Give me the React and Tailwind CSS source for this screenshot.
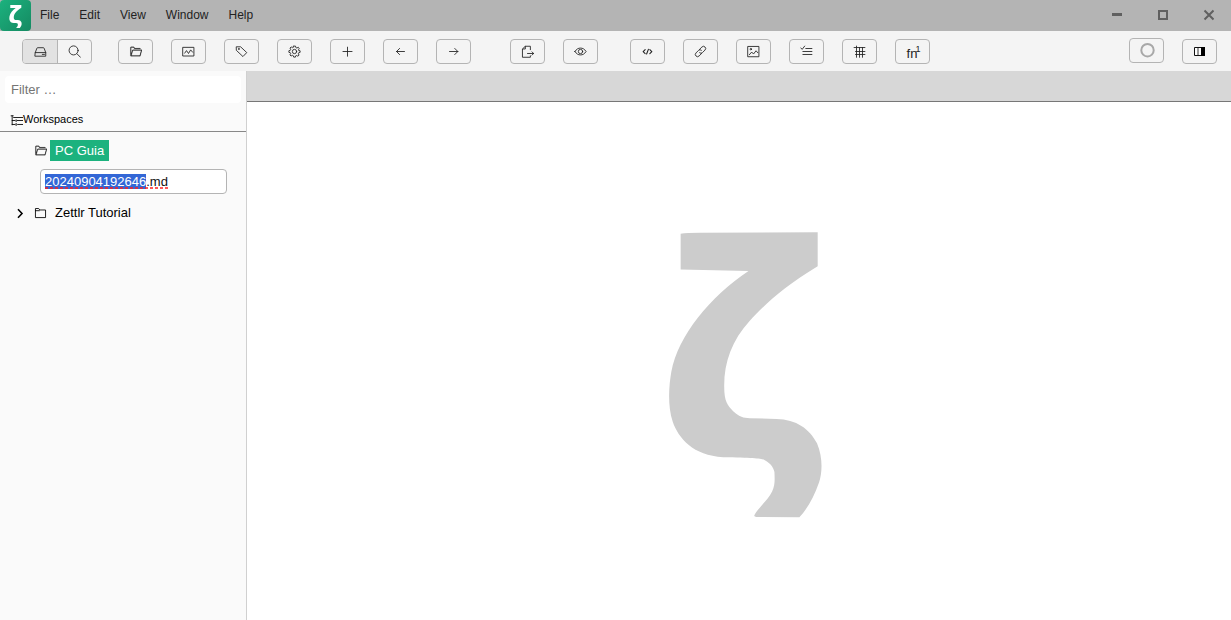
import { useEffect, useRef, useState } from "react";

const ZETA =
  "M92 40 Q110 37 150 37 L504 36 V138 C400 200 340 258 300 302 C245 362 222 430 223 500 C223 545 233 555 250 574 C270 592 280 594 300 595 L380 597 C440 598 480 627 502 670 C520 712 518 760 508 788 C492 834 472 868 449 893 L320 892 Q311 891 314 886 C325 865 355 840 367 815 C376 797 375 780 374 757 C372 740 355 725 345 721 C335 715 310 714 220 712 C130 708 85 655 68 605 C52 555 57 495 64 455 C85 345 180 230 296 152 L92 148 Z";

function Zeta({ className }) {
  return (
    <svg className={className} viewBox="57 36 460 858" fill="currentColor" aria-hidden="true">
      <path d={ZETA} />
    </svg>
  );
}

function Icon({ children, className = "h-[13px] w-[13px]" }) {
  return (
    <svg
      className={className}
      viewBox="0 0 36 36"
      fill="none"
      stroke="currentColor"
      strokeWidth="2.4"
      strokeLinejoin="round"
      strokeLinecap="round"
      aria-hidden="true"
    >
      {children}
    </svg>
  );
}

const icons = {
  disk: <path d="M3.5 21 L8 9 Q8.5 7.5 10 7.5 H26 Q27.5 7.5 28 9 L32.5 21 V31 H3.5 Z M3.5 21 H32.5 M23 26 H29" />,
  search: (
    <>
      <circle cx="15.5" cy="15" r="12.5" />
      <path d="M25 24.5 L34.5 34" />
    </>
  ),
  folderOpen: (
    <path
      fill="currentColor"
      strokeWidth="0.6"
      d="M35.32,13.74A1.71,1.71,0,0,0,33.87,13H11.17a2.59,2.59,0,0,0-2.25,1.52,1,1,0,0,0,0,.14L6,25V7h6.49l2.61,3.59a1,1,0,0,0,.81.41H32a2,2,0,0,0-2-2H16.4L14,5.6A2,2,0,0,0,12.37,5H6A2,2,0,0,0,4,7V29.69A1.37,1.37,0,0,0,5.41,31H30.34a1,1,0,0,0,1-.72l4.19-15.1A1.64,1.64,0,0,0,35.32,13.74ZM29.55,29H6.9l3.88-13.81a.66.66,0,0,1,.38-.24H33.49Z"
    />
  ),
  folder: <path d="M4 31 V7 H13 L16 11 H32 V31 Z M4 13 H15" />,
  chart: <path d="M3 6.5 H33 V30.5 H3 Z M7.5 22.5 L12.5 15.5 L18 23.5 L24 13.5 L29.5 20" />,
  tag: (
    <>
      <path d="M4.5 5 H15.5 L32.5 21 L22 32 L4.5 15.5 Z" />
      <circle cx="10.5" cy="11" r="1.2" />
    </>
  ),
  cog: (
    <>
      <circle cx="18" cy="18" r="6" />
      <path d="M15.3 3 H20.7 L21.8 7.2 L24.6 8.4 L28.4 6.2 L31 10 L29 13.2 L29.8 15.4 L33.5 16 V20.5 L29.5 21.6 L28.6 24.2 L30.6 28 L27.2 31 L23.8 29 L21.5 29.8 L20.6 33.5 H15.8 L14.7 29.6 L12.2 28.6 L8.4 30.6 L5.2 27.4 L7.4 23.8 L6.4 21.3 L2.5 20.4 V15.8 L6.4 14.7 L7.5 12 L5.4 8.4 L8.8 5.4 L12.2 7.4 L14.3 6.6 Z" />
    </>
  ),
  plus: <path d="M18 6 V31 M5.5 18 H30.5" />,
  back: <path d="M29 18 H7 M15.5 9.5 L7 18 L15.5 26.5" />,
  forward: <path d="M7 18 H30 M21.5 9.5 L30 18 L21.5 26.5" />,
  exportFile: (
    <path d="M26 13 V3.5 H12 L4 11 V34 H26 V30 M5 11 H12 V4 M18 23.5 H35 M30.5 19 L35 23.5 L30.5 28" />
  ),
  eye: (
    <>
      <path d="M2.5 18 C7 11 12 8.5 18 8.5 S29 11 33.5 18 C29 25 24 27.5 18 27.5 S7 25 2.5 18 Z" />
      <circle cx="18" cy="18" r="6" />
    </>
  ),
  code: <path strokeWidth="3" d="M11.5 13 L6 18.5 L11.5 24 M24.5 13 L30 18.5 L24.5 24 M20.5 12 L15.5 25" />,
  link: (
    <>
      <path d="M15 12.5 L22 5.5 A5.8 5.8 0 0 1 30.5 14 L23.5 21 A5.8 5.8 0 0 1 15.5 21.5" />
      <path d="M21 23.5 L14 30.5 A5.8 5.8 0 0 1 5.5 22 L12.5 15 A5.8 5.8 0 0 1 20.5 14.5" />
    </>
  ),
  image: (
    <>
      <path d="M3 4 H33 V32.5 H3 Z M6.5 27 L13 19.5 L18 25 L25 16 L30 21.5" />
      <circle cx="10.5" cy="11.5" r="2" />
    </>
  ),
  tasks: <path d="M2 8 L6 12 L13 3 M16 9.7 H33 M8 18 H33 M8 26.3 H33" />,
  table: <path d="M3 7 H33 M7 18 H33 M7 26.3 H33 M9.7 3 V34 M18 7 V34 M26.3 7 V34" />,
  tree: (
    <path d="M6 5 V30 M10 9.7 H35 M6 18 H14 M20 18 H35 M6 29 H14 M21 29 H35 M3 5 H9 M17 16 V21 M17 26 V32" />
  ),
};

const frame =
  "flex h-[25px] w-[35px] items-center justify-center rounded border border-[#b4b4b4] text-[#222]";

function ToolButton({ label, icon, className = "", children }) {
  return (
    <button type="button" aria-label={label} className={`${frame} ${className}`}>
      {icon ? <Icon>{icons[icon]}</Icon> : children}
    </button>
  );
}

function TitleBar() {
  return (
    <header className="flex h-[31px] items-center bg-[#b4b4b4] pb-px text-xs text-[#222]">
      <div className="mt-px flex h-[31px] w-[31px] items-center justify-center rounded bg-gradient-to-br from-[#1cb27e] to-[#158a62] pt-0.5 text-white">
        <Zeta className="h-[23px] w-[13px]" />
      </div>
      <nav className="flex gap-5 pl-[9px]">
        {["File", "Edit", "View", "Window", "Help"].map((name) => (
          <button key={name} type="button">
            {name}
          </button>
        ))}
      </nav>
      <div className="ml-auto flex h-full text-[#606060]">
        <button type="button" aria-label="Minimize" className="flex w-[46px] items-center justify-center">
          <svg className="h-3 w-3" viewBox="0 0 12 12" aria-hidden="true">
            <path d="M2 4 H12 V7 H2 Z" fill="currentColor" />
          </svg>
        </button>
        <button type="button" aria-label="Maximize" className="flex w-[46px] items-center justify-center">
          <svg className="h-3 w-3" viewBox="0 0 12 12" aria-hidden="true">
            <path d="M3 2 H11 V10 H3 Z" fill="none" stroke="currentColor" strokeWidth="2" />
          </svg>
        </button>
        <button type="button" aria-label="Close" className="flex w-[46px] items-center justify-center">
          <svg className="h-3 w-3" viewBox="0 0 12 12" aria-hidden="true">
            <path d="M2.5 1.5 L11.5 10.5 M11.5 1.5 L2.5 10.5" fill="none" stroke="currentColor" strokeWidth="2" />
          </svg>
        </button>
      </div>
    </header>
  );
}

function Toolbar() {
  return (
    <div className="flex h-10 items-center bg-[#f4f4f4] pt-px pr-3.5 pl-[22px]">
      <div className="flex h-[25px] w-[70px] overflow-hidden rounded border border-[#b4b4b4] text-[#222]">
        <button
          type="button"
          aria-label="File manager"
          aria-pressed="true"
          className="flex w-[35px] items-center justify-center border-r border-[#b4b4b4] bg-[#e2e2e2]"
        >
          <Icon>{icons.disk}</Icon>
        </button>
        <button type="button" aria-label="Search" className="flex flex-1 items-center justify-center">
          <Icon>{icons.search}</Icon>
        </button>
      </div>
      <div className="ml-[26px] flex gap-[18px]">
        <ToolButton label="Open workspace" icon="folderOpen" />
        <ToolButton label="Statistics" icon="chart" />
        <ToolButton label="Tags" icon="tag" />
        <ToolButton label="Preferences" icon="cog" />
        <ToolButton label="New file" icon="plus" />
        <ToolButton label="Back" icon="back" />
        <ToolButton label="Forward" icon="forward" />
      </div>
      <div className="ml-[39px] flex gap-[18px]">
        <ToolButton label="Export" icon="exportFile" />
        <ToolButton label="Readability" icon="eye" />
      </div>
      <div className="ml-8 flex gap-[18px]">
        <ToolButton label="Insert code" icon="code" />
        <ToolButton label="Insert link" icon="link" />
        <ToolButton label="Insert image" icon="image" />
        <ToolButton label="Insert task list" icon="tasks" />
        <ToolButton label="Insert table" icon="table" />
        <ToolButton label="Insert footnote">
          <span className="pt-1 pl-0.5 text-[13px] leading-none">fn</span>
          <span className="-ml-0.5 pb-1 text-[9px] leading-none">1</span>
        </ToolButton>
      </div>
      <div className="ml-auto flex gap-[18px]">
        <ToolButton label="Pomodoro timer" className="-mt-px mb-px">
          <svg className="h-4 w-4" viewBox="0 0 16 16" aria-hidden="true">
            <circle cx="8.5" cy="7.2" r="6.2" fill="none" stroke="#a8a8a8" strokeWidth="2" />
          </svg>
        </ToolButton>
        <ToolButton label="Toggle sidebar">
          <svg className="h-[9px] w-[11px]" viewBox="0 0 11 9" aria-hidden="true">
            <path d="M0.5 0.5 H10.5 V8.5 H0.5 Z" fill="#fff" stroke="#111" />
            <path d="M3 1 H5 V8 H3 Z" fill="#999" />
            <path d="M7 0 H11 V9 H7 Z" fill="#000" />
          </svg>
        </ToolButton>
      </div>
    </div>
  );
}

function FileNameInput() {
  const ref = useRef(null);
  const [name, setName] = useState("20240904192646.md");
  useEffect(() => {
    ref.current.focus();
    ref.current.setSelectionRange(0, 14);
  }, []);
  return (
    <div className="relative ml-10 w-[187px]">
      <input
        ref={ref}
        aria-label="File name"
        value={name}
        spellCheck={false}
        onChange={(e) => setName(e.target.value)}
        className="block h-[25px] w-full rounded border border-[#b4b4b4] bg-white px-1 text-[13px] text-[#111] outline-none selection:bg-[#3367d6] selection:text-white"
      />
      <svg className="pointer-events-none absolute top-[18px] left-[5px] h-0.5 w-[123px]" aria-hidden="true">
        <line x1="0" y1="1" x2="123" y2="1" stroke="#ff2020" strokeWidth="1.6" strokeDasharray="3 2" />
      </svg>
    </div>
  );
}

function Sidebar() {
  return (
    <aside className="flex w-[247px] shrink-0 flex-col border-r border-[#d0d0d0] bg-[#fafafa] text-black">
      <div className="p-[5px]">
        <input
          type="search"
          aria-label="Filter"
          placeholder="Filter …"
          className="h-[27px] w-full rounded bg-white px-1.5 text-[13px] outline-none placeholder:text-[#757575]"
        />
      </div>
      <h2 className="flex h-6 items-center border-b border-[#888] pl-2.5 text-[11px]">
        <Icon className="mt-0.5 h-[13px] w-[13px]">{icons.tree}</Icon>
        Workspaces
      </h2>
      <ul className="flex flex-col pt-[3px] text-[13px]">
        <li className="flex h-[31px] items-center pl-[34px] text-[#222]">
          <Icon>{icons.folderOpen}</Icon>
          <a href="#pc-guia" className="ml-[3px] bg-[#1cb27e] px-[5px] leading-[21px] text-white">
            PC Guia
          </a>
        </li>
        <li className="flex h-[31px] items-center">
          <FileNameInput />
        </li>
        <li className="flex h-[31px] items-center">
          <button type="button" aria-label="Expand Zettlr Tutorial" className="ml-3.5 w-5">
            <svg className="h-3 w-3" viewBox="0 0 12 12" fill="none" stroke="currentColor" strokeWidth="1.6" aria-hidden="true">
              <path d="M4 2.3 L8 6.5 L4 10.7" />
            </svg>
          </button>
          <Icon>{icons.folder}</Icon>
          <a href="#tutorial" className="ml-[3px] px-[5px] leading-[21px]">
            Zettlr Tutorial
          </a>
        </li>
      </ul>
    </aside>
  );
}

export default function App() {
  return (
    <div className="flex min-h-screen flex-col bg-white font-['Liberation_Sans',Arial,sans-serif]">
      <TitleBar />
      <Toolbar />
      <div className="flex flex-1">
        <Sidebar />
        <main className="flex min-w-0 flex-1 flex-col">
          <div className="h-[31px] border-b border-[#777] bg-[#d7d7d7]" />
          <div className="flex flex-1 items-center justify-center pt-7 pl-[13px] text-[#ccc]">
            <Zeta className="h-[286px] w-[153px]" />
          </div>
        </main>
      </div>
    </div>
  );
}
